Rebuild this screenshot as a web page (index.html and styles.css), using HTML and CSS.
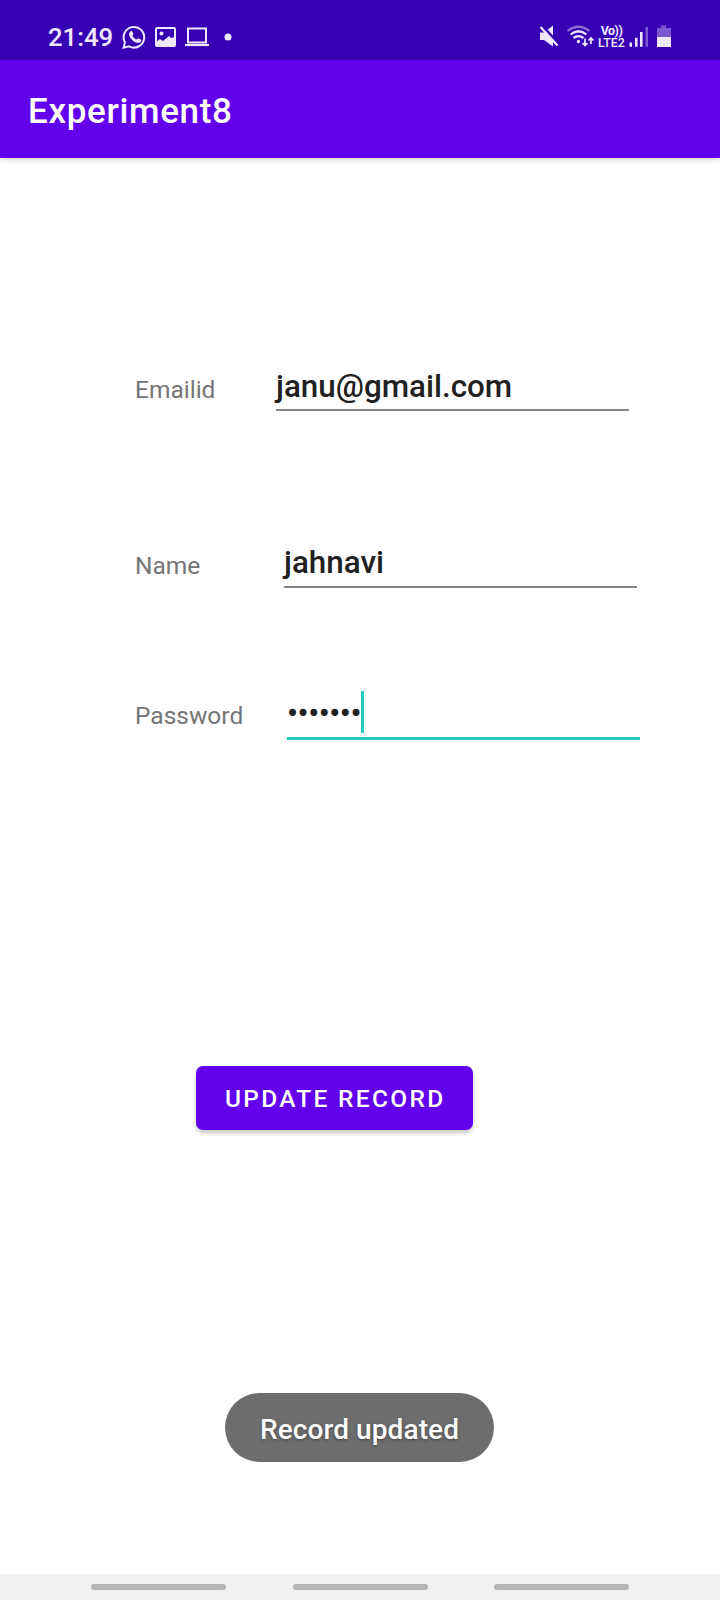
FILE: index.html
```html
<!DOCTYPE html>
<html lang="en">
<head>
<meta charset="utf-8">
<title>Experiment8</title>
<link rel="stylesheet" href="styles.css">
</head>
<body>
<div class="screen">
  <div class="status">
    <span class="time">21:49</span>
    <svg class="left-icons" width="112" height="30" viewBox="122 22 112 30" fill="none" stroke="#efe6ff">
      <path d="M123.6 47.600l1.400-5.200a10.300 10.300 0 1 1 4 3.900z" stroke-width="2"/>
      <path d="M130.200 31.600c.8-.9 1.900-.8 2.300.2l.8 2c.2.6-.1 1.100-.9 1.900 1 2 2.300 3 4.300 3.900.9-.8 1.200-1.500 1.900-1.200l2.300 1.100c.8.4.6 1.600-.3 2.400-2.200 1.900-5.300.8-8-1.500-2.800-2.500-4.800-6.100-2.400-8.800z" fill="#efe6ff" stroke="none"/>
      <rect x="156" y="28" width="19" height="18" rx="1" stroke-width="2"/>
      <circle cx="161.500" cy="33.500" r="2" fill="#efe6ff" stroke="none"/>
      <path d="M156 42l4-3 3 2 6-5 2 2 4-1v9h-19z" fill="#efe6ff" stroke="none"/>
      <path d="M188 28.500h18v14h-18z" stroke-width="2"/>
      <path d="M185 45h24" stroke-width="2.200"/>
      <circle cx="228" cy="37" r="3.500" fill="#efe6ff" stroke="none"/>
    </svg>
    <span class="gap"></span>
    <svg class="right-icons" width="58" height="26" viewBox="538 24 58 26" fill="none" stroke="#efe6ff">
      <path d="M541 32.500h4l9-7v21l-9-6.500h-4z" fill="#efe6ff" stroke="none"/>
      <path d="M543 25.500l17 19" stroke="#3700b3" stroke-width="3"/>
      <path d="M541.500 27l17 18.500" stroke-width="2.200"/>
      <path d="M568.500 31q11-8.500 22 0" stroke="#8f6fd8" stroke-width="2.200"/>
      <path d="M571.500 34.500q8-6.500 16 0M574.500 38q5-3.700 10 0" stroke-width="2.200"/>
      <circle cx="579.500" cy="41.500" r="1.700" fill="#efe6ff" stroke="none"/>
      <path d="M586 38.500v7M583.500 43l2.500 2.500 2.500-2.500M592 44v-6M589.500 40.500l2.500-2.500 2.500 2.500" stroke-width="1.700"/>
    </svg>
    <span class="volte"><span class="vo">Vo))</span><span>LTE2</span></span>
    <svg class="signal" width="44" height="24" viewBox="629 24 44 24">
      <path d="M630.500 42.500h2.500v4.300h-2.500zM636 37.700h2.500v9.100h-2.500zM641 32h2.600v14.800h-2.600z" fill="#efe6ff"/>
      <path d="M646.500 27h2.500v19.800h-2.500zM662 25.500h5V28h5v9h-14v-9h4z" fill="#7d59d1"/>
      <path d="M658 37h14v10h-14z" fill="#efe6ff"/>
    </svg>
  </div>
  <div class="appbar"><span class="title">Experiment8</span></div>
  <div class="form">
    <div class="row email"><span class="label">Emailid</span><span class="field">janu@gmail.com</span></div>
    <div class="row name"><span class="label">Name</span><span class="field">jahnavi</span></div>
    <div class="row password"><span class="label">Password</span><span class="field"><span class="dots">•••••••</span><i class="caret"></i></span></div>
    <div class="button"><span>UPDATE RECORD</span></div>
    <div class="toast"><span>Record updated</span></div>
  </div>
  <div class="nav"><i></i><i></i><i></i></div>
</div>
</body>
</html>
```
FILE: styles.css
```css
* { box-sizing: border-box; }
body { margin: 0; background: #fff; font-family: Roboto, sans-serif; }
.screen { width: 720px; height: 1600px; display: flex; flex-direction: column; overflow: hidden; }
.status { height: 60px; flex: none; background: #3700b3; color: #efe6ff; display: flex; padding: 0 48px; }
.time { width: 74px; padding-top: 21px; font-size: 25.7px; line-height: 32px; font-weight: 500; white-space: nowrap; }
.left-icons { margin-top: 22px; }
.gap { flex: 1; }
.right-icons { margin-top: 24px; flex: none; }
.volte { width: 29px; margin: 0 2px; padding-top: 25px; display: flex; flex: none; flex-direction: column; font-size: 12.4px; line-height: 12px; font-weight: 500; align-items: center; }
.vo { font-weight: 700; letter-spacing: -.5px; }
.signal { margin: 24px 0 0; flex: none; }
.appbar { height: 98px; flex: none; background: #6200ee; color: #fff; padding: 30px 28px 0; box-shadow: 0 2px 5px rgba(0, 0, 0, .16); }
.title { display: inline-block; font-size: 35px; line-height: 43px; font-weight: 500; letter-spacing: .65px; }
.form { flex: 1; display: flex; flex-direction: column; padding-left: 135px; }
.row { display: flex; align-items: flex-start; height: 48px; }
.label { font-size: 24.5px; line-height: 30px; color: #757575; padding-top: 11px; white-space: nowrap; }
.field { width: 353px; height: 48px; border-bottom: 2px solid #858585; color: #212121; font-size: 31.4px; line-height: 46px; font-weight: 500; white-space: nowrap; }
.email { margin-top: 205px; }
.email .label { width: 141px; padding-top: 12px; }
.email .field { line-height: 48px; }
.name { margin-top: 129px; }
.name .label { width: 149px; }
.password { margin-top: 102px; height: 50px; }
.password .label { width: 152px; }
.password .field { height: 50px; border-bottom: 3px solid #1fcbbd; display: flex; }
.dots { width: 74px; padding-top: 1px; letter-spacing: -.4px; }
.caret { width: 3px; height: 42px; margin-top: 1px; background: #1fcbbd; }
.button { width: 277px; height: 64px; margin: 326px 0 0 61px; border-radius: 7px; background: #6200ee; color: #fff; font-size: 24.5px; line-height: 65px; font-weight: 500; letter-spacing: 2.3px; padding-left: 29px; box-shadow: 0 3px 4px rgba(0, 0, 0, .22); white-space: nowrap; }
.toast { width: 269px; height: 69px; margin: 263px 0 0 90px; border-radius: 35px; background: #6d6d6d; color: #fff; font-size: 28px; line-height: 73px; font-weight: 500; letter-spacing: .1px; text-align: center; text-shadow: 0 1px 3px rgba(0, 0, 0, .4); white-space: nowrap; }
.nav { height: 26px; flex: none; background: #f1f1f1; display: flex; padding: 10px 0 0 91px; gap: 66.500px; }
.nav i { width: 135px; height: 6px; border-radius: 3px; background: #b5b5b5; }
```
